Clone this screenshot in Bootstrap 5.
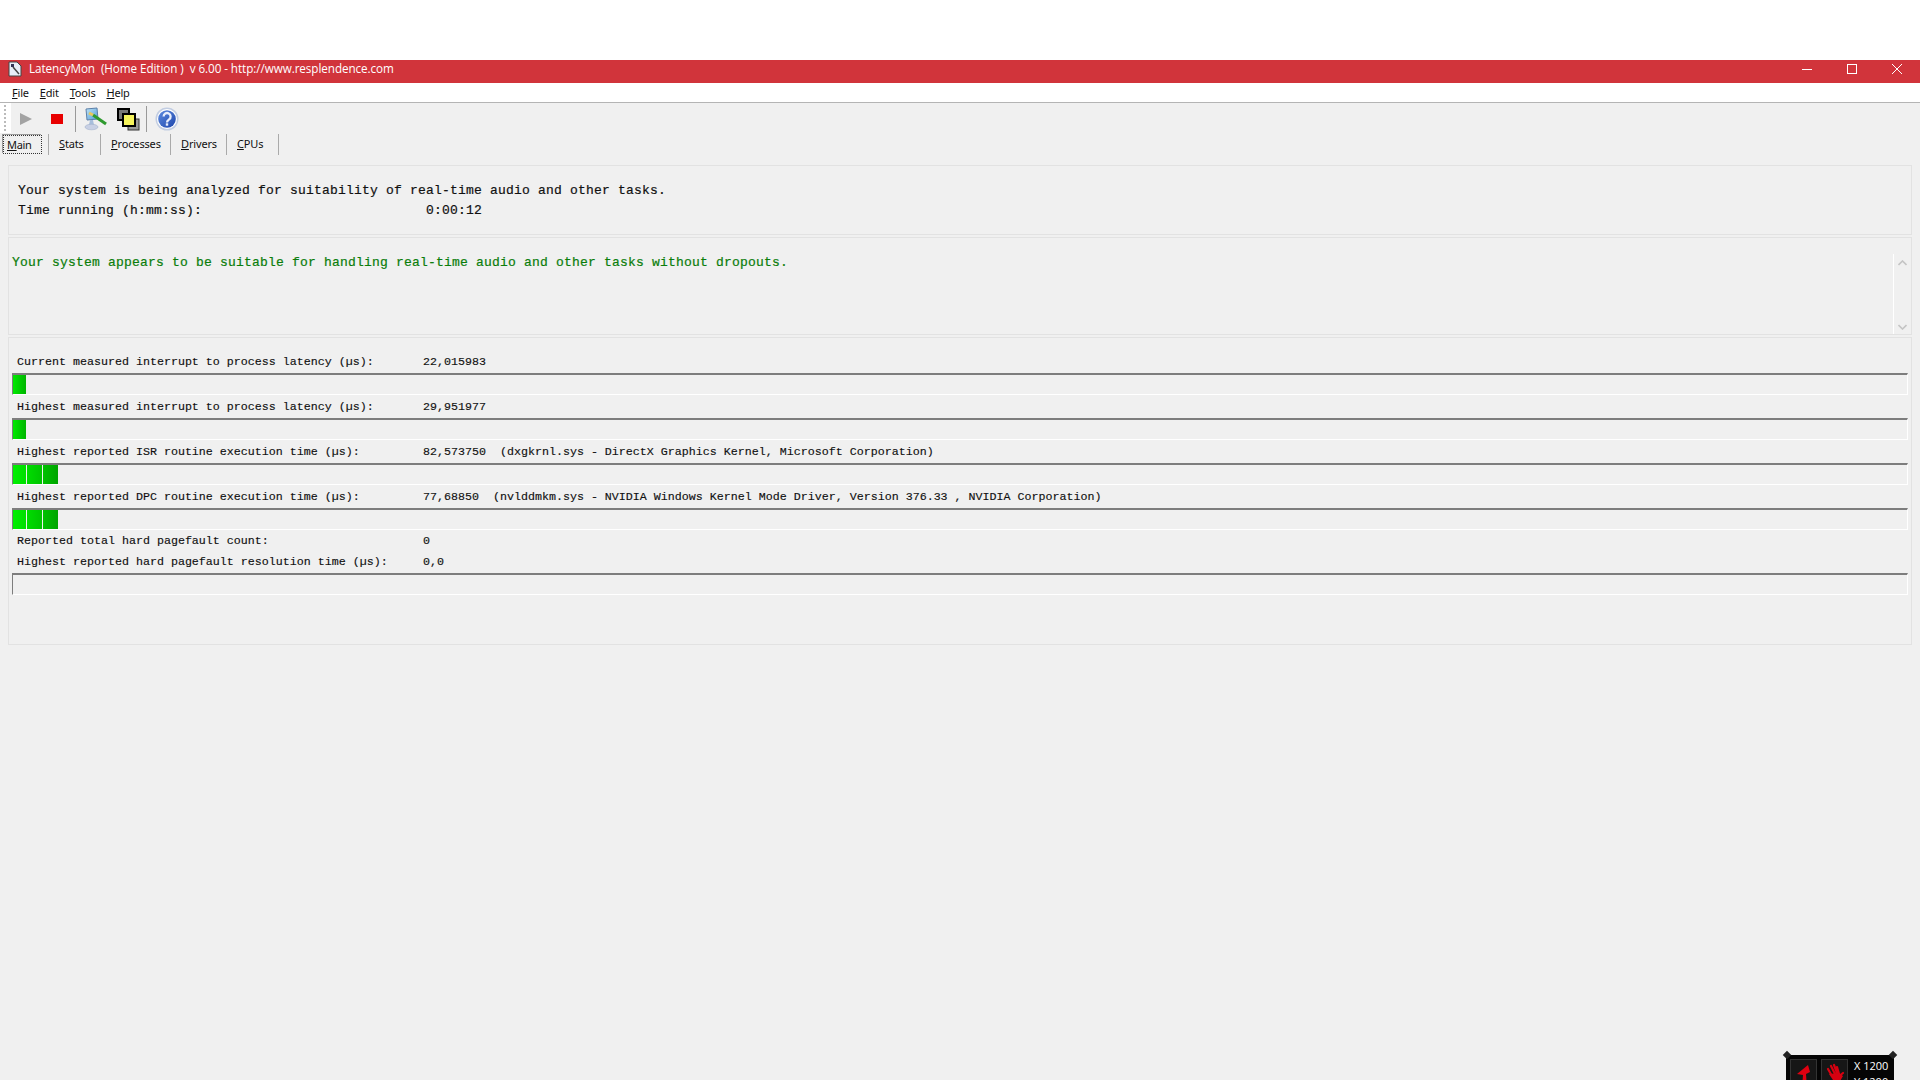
<!DOCTYPE html>
<html lang="en">
<head>
<meta charset="utf-8">
<title>LatencyMon</title>
<link href="https://cdn.jsdelivr.net/npm/bootstrap@5.3.0/dist/css/bootstrap.min.css" rel="stylesheet">
<style>
html,body{height:1080px;overflow:hidden}
body{background:#f0f0f0;color:#111;font-family:"Noto Sans","Liberation Sans",sans-serif;position:relative}
.topgap{height:60px;background:#fff}
.titlebar{height:23px;background:#d1343b;color:#fff;padding-left:8px;padding-bottom:5px}
.titlebar .ttl{white-space:pre;margin-left:7px;font-family:"Open Sans",sans-serif;font-size:11.7px;letter-spacing:-.07px}
.winbtns{margin-left:auto;gap:35px;padding-right:18px;padding-bottom:1px}
.menubar{height:20px;background:#fff;border-bottom:1px solid #b4b4b4;font-size:11px;padding-left:12px;gap:11px;letter-spacing:-.2px;padding-top:1px}
u{text-underline-offset:1px}
.toolstrip{height:30px;padding-left:20px;padding-top:2px}
.gripper{position:absolute;left:0;top:103px;width:11px;height:30px;background:#fff}
.gripper::after{content:"";position:absolute;left:4px;top:2px;width:2px;height:26px;background:repeating-linear-gradient(#bbb 0 2px,transparent 2px 4px)}
.tsep{width:1px;height:26px;background:#999}
.tabstrip{height:22px;font-size:11px;padding-left:3px;letter-spacing:-.15px}
.tabitem{height:21px;display:flex;align-items:center}
.tabactive{width:39px;height:19px;border:1px dotted #333;box-shadow:inset 0 0 0 1px #eee,-1px -1px 0 #999;padding-left:3px;line-height:18px;letter-spacing:-.35px}
.vsep{width:1px;height:21px;background:#aaa}
.panelwrap{padding:10px 8px 0 8px;display:flex;flex-direction:column;gap:2px}
.pane{border:1px solid #e2e2e2;font-family:"Liberation Mono","Courier New",monospace}
.pane1,.pane2{font-size:13px;letter-spacing:.2px;line-height:20px;white-space:pre;-webkit-text-stroke:.2px}
.pane1{height:70px;padding:15px 0 0 9px}
.pane2{height:98px;padding:15px 0 0 3px;color:#0a7d0a;position:relative}
.pane3{height:308px;padding:12px 3px 0 3px;font-size:11.67px;-webkit-text-stroke:.15px}
.slab{display:flex;height:23px;align-items:center;padding:2px 0 0 5px;white-space:pre}
.slab.thin{height:22px}
.slab.thin2{height:21px;padding-top:1px}
.slab>span:first-child{width:406px;flex:none}
.meter{height:22px;border-top:2px solid #7d7d7d;border-left:1px solid #7d7d7d;border-right:1px solid #fff;border-bottom:1px solid #fff;display:flex;gap:1px}
.seg{width:15px;height:19px}
.seg.only{width:13px;background:linear-gradient(90deg,#00ea00,#00b400)}
.seg.s1{width:13px;background:linear-gradient(90deg,#00f000,#00de00)}
.seg.s2{background:linear-gradient(90deg,#00dc00,#00c400)}
.seg.s3{background:linear-gradient(90deg,#00c200,#00a400)}
.scrollcol{position:absolute;right:0;top:16px;bottom:0;width:18px;border-left:1px solid #fff;display:flex;flex-direction:column;justify-content:space-between;align-items:center;padding:6px 0 4px}
.overlayhud{position:absolute;left:1786px;top:1055px;width:108px;height:40px;background:#050505;color:#fff;font-size:11px;line-height:16px;font-family:"Open Sans",sans-serif}
.hudbox{width:27px;height:30px;background:#161616;border:1px solid #333}
.hudtxt{margin-left:6px;white-space:pre;padding-top:3px}
.dot{position:absolute;top:-3px;width:6px;height:6px;background:#222;transform:rotate(45deg)}
</style>
</head>
<body>
<div class="topgap"></div>
<div class="titlebar d-flex align-items-center">
  <svg width="14" height="16" viewBox="0 0 14 16"><path d="M1 1h8l4 4v10H1z" fill="#e8eef8" stroke="#444"/><path d="M5 6l6 7" stroke="#444" stroke-width="1.5"/><rect x="3" y="3" width="3" height="3" fill="#335"/></svg>
  <span class="ttl">LatencyMon  (Home Edition )  v 6.00 - http://www.resplendence.com</span>
  <div class="winbtns d-flex align-items-center">
    <svg width="10" height="10" viewBox="0 0 10 10"><path d="M0 5.5h10" stroke="#fff"/></svg>
    <svg width="10" height="10" viewBox="0 0 10 10"><rect x=".5" y=".5" width="9" height="9" fill="none" stroke="#fff"/></svg>
    <svg width="10" height="10" viewBox="0 0 10 10"><path d="M0 0l10 10M10 0L0 10" stroke="#fff"/></svg>
  </div>
</div>
<div class="menubar d-flex align-items-center">
  <span><u>F</u>ile</span><span><u>E</u>dit</span><span><u>T</u>ools</span><span><u>H</u>elp</span>
</div>
<div class="gripper"></div>
<div class="toolstrip d-flex align-items-center">
  <svg width="12" height="12" viewBox="0 0 12 12"><path d="M0 0l12 6L0 12z" fill="#a3a3a3"/></svg>
  <svg width="12" height="10" viewBox="0 0 12 10" style="margin-left:19px"><rect width="12" height="10" fill="#e80000"/></svg>
  <div class="tsep" style="margin-left:12px"></div>
  <svg width="24" height="24" viewBox="0 0 24 24" style="margin-left:8px"><defs><linearGradient id="scr" x1="0" y1="0" x2="1" y2="1"><stop offset="0" stop-color="#bfe4f6"/><stop offset="1" stop-color="#4f9ad8"/></linearGradient></defs><path d="M2 2l11-1 1 11-11 1z" fill="url(#scr)" stroke="#5c7fa8"/><path d="M6 13l-1 5h5l-1-5z" fill="#a8bedc"/><ellipse cx="7.5" cy="20" rx="6.5" ry="2.8" fill="#c8d0e4" stroke="#98a8c4" stroke-width=".5"/><path d="M9 8l13 9" stroke="#2f9a2f" stroke-width="3"/><path d="M5 6l4 2" stroke="#e8c85a" stroke-width="3"/></svg>
  <svg width="23" height="23" viewBox="0 0 23 23" style="margin-left:9px"><rect x="1" y="1" width="11" height="11" fill="#777" stroke="#000" stroke-width="2"/><rect x="11" y="11" width="11" height="11" fill="#999" stroke="#333"/><rect x="6" y="6" width="12" height="12" fill="#f5f35c" stroke="#000" stroke-width="2"/></svg>
  <div class="tsep" style="margin-left:6px"></div>
  <svg width="24" height="24" viewBox="0 0 24 24" style="margin-left:8px"><defs><linearGradient id="hb" x1="0" y1="0" x2="1" y2="1"><stop offset="0" stop-color="#5d8be0"/><stop offset="1" stop-color="#1e46ac"/></linearGradient></defs><circle cx="12" cy="12" r="11.5" fill="#c2cde2"/><circle cx="12" cy="12" r="10" fill="#fff"/><circle cx="12" cy="12" r="8.8" fill="url(#hb)"/><path d="M8.6 9.5a3.5 3.5 0 1 1 5.5 2.9c-1.4 1-2.1 1.4-2.1 3" fill="none" stroke="#e8eefc" stroke-width="2.3"/><rect x="10.8" y="16.3" width="2.4" height="2.4" fill="#e8eefc"/></svg>
</div>
<div class="tabstrip d-flex align-items-center">
  <div class="tabactive"><u>M</u>ain</div>
  <div class="vsep" style="margin-left:6px"></div>
  <div class="tabitem" style="width:51px;padding-left:10px"><span><u>S</u>tats</span></div>
  <div class="vsep"></div>
  <div class="tabitem" style="width:69px;padding-left:10px"><span><u>P</u>rocesses</span></div>
  <div class="vsep"></div>
  <div class="tabitem" style="width:55px;padding-left:10px"><span><u>D</u>rivers</span></div>
  <div class="vsep"></div>
  <div class="tabitem" style="width:51px;padding-left:10px"><span><u>C</u>PUs</span></div>
  <div class="vsep"></div>
</div>
<div class="panelwrap">
  <div class="pane pane1">Your system is being analyzed for suitability of real-time audio and other tasks.
Time running (h:mm:ss):                            0:00:12</div>
  <div class="pane pane2">Your system appears to be suitable for handling real-time audio and other tasks without dropouts.<div class="scrollcol">
      <svg width="9" height="6" viewBox="0 0 9 6"><path d="M.5 5l4-4 4 4" fill="none" stroke="#c4c4c4" stroke-width="1.6"/></svg>
      <svg width="9" height="6" viewBox="0 0 9 6"><path d="M.5 1l4 4 4-4" fill="none" stroke="#c4c4c4" stroke-width="1.6"/></svg>
    </div></div>
  <div class="pane pane3">
    <div class="slab"><span>Current measured interrupt to process latency (µs):</span><span>22,015983</span></div>
    <div class="meter"><div class="seg only"></div></div>
    <div class="slab"><span>Highest measured interrupt to process latency (µs):</span><span>29,951977</span></div>
    <div class="meter"><div class="seg only"></div></div>
    <div class="slab"><span>Highest reported ISR routine execution time (µs):</span><span>82,573750  (dxgkrnl.sys - DirectX Graphics Kernel, Microsoft Corporation)</span></div>
    <div class="meter"><div class="seg s1"></div><div class="seg s2"></div><div class="seg s3"></div></div>
    <div class="slab"><span>Highest reported DPC routine execution time (µs):</span><span>77,68850  (nvlddmkm.sys - NVIDIA Windows Kernel Mode Driver, Version 376.33 , NVIDIA Corporation)</span></div>
    <div class="meter"><div class="seg s1"></div><div class="seg s2"></div><div class="seg s3"></div></div>
    <div class="slab thin"><span>Reported total hard pagefault count:</span><span>0</span></div>
    <div class="slab thin2"><span>Highest reported hard pagefault resolution time (µs):</span><span>0,0</span></div>
    <div class="meter"></div>
  </div>
</div>
<div class="overlayhud d-flex">
  <span class="dot" style="left:-2px"></span><span class="dot" style="right:-2px"></span>
  <div class="hudbox ms-1 mt-1"><svg width="25" height="28" viewBox="0 0 25 28"><path d="M6 14l11-9 2 7-4 2 1 14h-5l1-13z" fill="#e00010"/></svg></div>
  <div class="hudbox mt-1 ms-1"><svg width="25" height="28" viewBox="0 0 25 28"><g fill="none" stroke="#d80010" stroke-width="2.2" stroke-linecap="round"><path d="M6 9l4 7M9 6l4 8M12 5l3 8M15 7l2 7M21 13l-5 4"/></g><path d="M7 14l10-1 4 3-4 7-10 3 4-6z" fill="#d80010"/></svg></div>
  <div class="hudtxt">X 1200
Y 1200</div>
</div>
<script src="https://cdn.jsdelivr.net/npm/bootstrap@5.3.0/dist/js/bootstrap.bundle.min.js"></script>
</body>
</html>
